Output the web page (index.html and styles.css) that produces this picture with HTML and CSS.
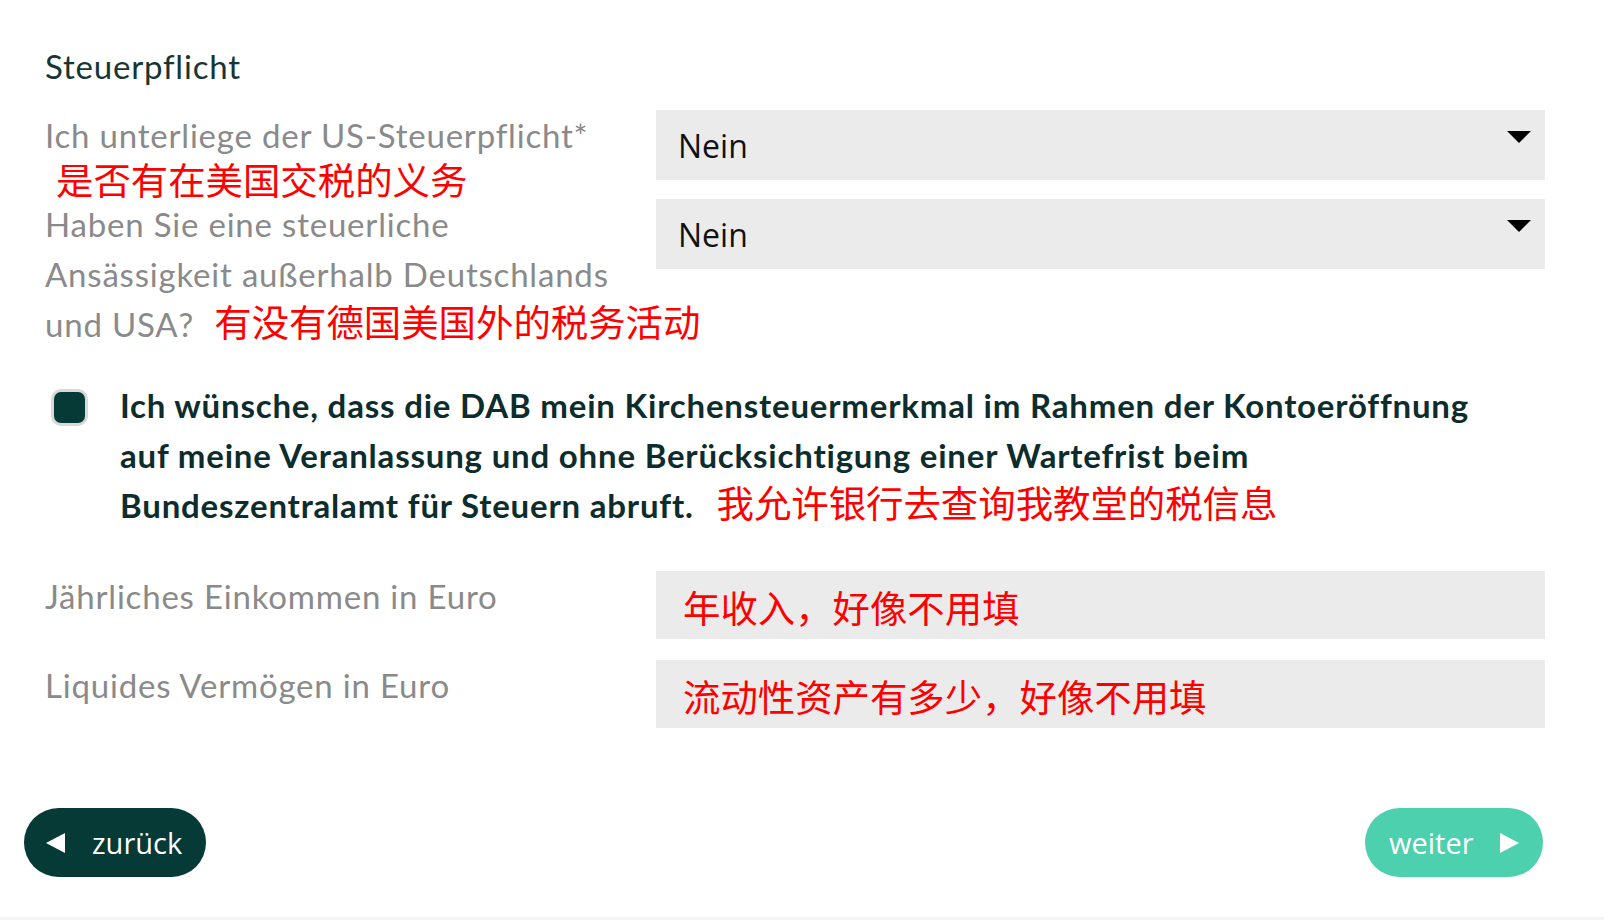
FILE: index.html
```html
<!DOCTYPE html>
<html lang="de">

<head>
    <meta charset="UTF-8">
    <meta name="viewport" content="width=device-width, initial-scale=1.0">
    <title>Steuerpflicht</title>
    <link rel="stylesheet" href="styles.css">
</head>

<body>

    <main class="page">

        <!-- Section title -->
        <h2 class="section-title">Steuerpflicht</h2>

        <!-- US tax -->
        <div class="form-row">
            <div class="field-label">
                Ich unterliege der US-Steuerpflicht*
                <span class="note note-block">是否有在美国交税的义务</span>
            </div>
            <div class="select-box">
                <span class="select-value">Nein</span>
                <span class="caret"></span>
            </div>
        </div>

        <!-- Other residence -->
        <div class="form-row">
            <div class="field-label">
                Haben Sie eine steuerliche<br>
                Ansässigkeit außerhalb Deutschlands<br>
                und USA? <span class="note note-inline">有没有德国美国外的税务活动</span>
            </div>
            <div class="select-box">
                <span class="select-value">Nein</span>
                <span class="caret"></span>
            </div>
        </div>

        <!-- Church tax -->
        <div class="check-row">
            <span class="checkbox checked"></span>
            <p class="check-text">
                Ich wünsche, dass die DAB mein Kirchensteuermerkmal im Rahmen der Kontoeröffnung<br>
                auf meine Veranlassung und ohne Berücksichtigung einer Wartefrist beim<br>
                Bundeszentralamt für Steuern abruft. <span class="note note-inline">我允许银行去查询我教堂的税信息</span>
            </p>
        </div>

        <!-- Income -->
        <div class="form-row row-input">
            <div class="field-label">Jährliches Einkommen in Euro</div>
            <div class="text-box">
                <span class="note">年收入，好像不用填</span>
            </div>
        </div>

        <!-- Assets -->
        <div class="form-row row-input">
            <div class="field-label">Liquides Vermögen in Euro</div>
            <div class="text-box">
                <span class="note">流动性资产有多少，好像不用填</span>
            </div>
        </div>

    </main>

    <!-- Navigation -->
    <div class="nav-buttons">
        <button class="btn btn-back"><span class="tri tri-left"></span>zurück</button>
        <button class="btn btn-next">weiter<span class="tri tri-right"></span></button>
    </div>

    <div class="footer-line"></div>

</body>

</html>
```

FILE: styles.css
```css
body {
    margin: 0;
    padding: 0;
    background-color: #fff;
    font-family: Lato, "Open Sans", sans-serif;
    color: #888;
}

.page {
    padding: 0 59px 0 45px;
}

.section-title {
    margin: 41px 0 0;
    font-size: 33px;
    line-height: 50px;
    font-weight: 400;
    letter-spacing: 0.8px;
    color: #173535;
}

/* Label + field rows */
.form-row {
    display: grid;
    grid-template-columns: 611px 1fr;
    align-items: start;
}

.section-title + .form-row {
    margin-top: 19px;
}

.field-label {
    font-size: 33px;
    line-height: 50px;
    letter-spacing: 0.8px;
    white-space: nowrap;
    color: #8a8a8a;
}

/* Red annotations */
.note {
    font-family: "Noto Sans CJK SC", sans-serif;
    font-size: 37.4px;
    letter-spacing: 0;
    color: #ff0000;
    font-weight: 400;
}

.note-block {
    display: block;
    line-height: 39px;
    padding-left: 11px;
}

.note-inline {
    margin-left: 11px;
    line-height: 1;
}

.select-box {
    height: 70px;
    background-color: #ebebeb;
    position: relative;
    display: flex;
    align-items: center;
    padding-left: 22px;
}

.select-value {
    font-family: "Open Sans", sans-serif;
    font-size: 32px;
    letter-spacing: 0;
    color: #111;
}

.select-box .caret {
    position: absolute;
    top: 21px;
    right: 14px;
    width: 0;
    height: 0;
    border-left: 12px solid transparent;
    border-right: 12px solid transparent;
    border-top: 12px solid #000;
}

/* Checkbox */
.check-row {
    display: flex;
    align-items: flex-start;
    margin-top: 31px;
}

.checkbox {
    flex: none;
    box-sizing: border-box;
    width: 37px;
    height: 37px;
    margin: 9px 0 0 6px;
    border: 3px solid #d9d9d9;
    border-radius: 10px;
    background-color: #fff;
}

.checkbox.checked {
    background-color: #063a37;
}

.check-text {
    margin: 0 0 0 32px;
    font-size: 33px;
    line-height: 50px;
    letter-spacing: 0.8px;
    font-weight: 700;
    white-space: nowrap;
    color: #0d2d2d;
}

.check-text .note-inline {
    margin-left: 14px;
}

.row-input {
    margin-top: 41px;
}

.row-input + .row-input {
    margin-top: 21px;
}

.text-box {
    height: 68px;
    background-color: #ebebeb;
    display: flex;
    align-items: center;
    padding-left: 27px;
    padding-top: 4px;
    box-sizing: border-box;
}

/* Back / next */
.nav-buttons {
    display: flex;
    justify-content: space-between;
    padding: 0 61px 0 24px;
    margin-top: 80px;
}

.btn {
    height: 69px;
    border: none;
    border-radius: 35px;
    color: #fff;
    font-family: "Open Sans", sans-serif;
    font-size: 29px;
    display: flex;
    align-items: center;
    cursor: pointer;
}

.btn-back {
    width: 182px;
    padding: 0 0 0 22px;
    background-color: #063a37;
}

.btn-next {
    width: 178px;
    padding: 0 0 0 24px;
    background-color: #4dd0ae;
}

.tri {
    width: 0;
    height: 0;
    border-top: 10px solid transparent;
    border-bottom: 10px solid transparent;
}

.tri-left {
    border-right: 19px solid #fff;
    margin-right: 27px;
}

.tri-right {
    border-left: 19px solid #fff;
    margin-left: 26px;
}

.footer-line {
    height: 3px;
    margin-top: 40px;
    background-color: #f4f4f4;
}
```
